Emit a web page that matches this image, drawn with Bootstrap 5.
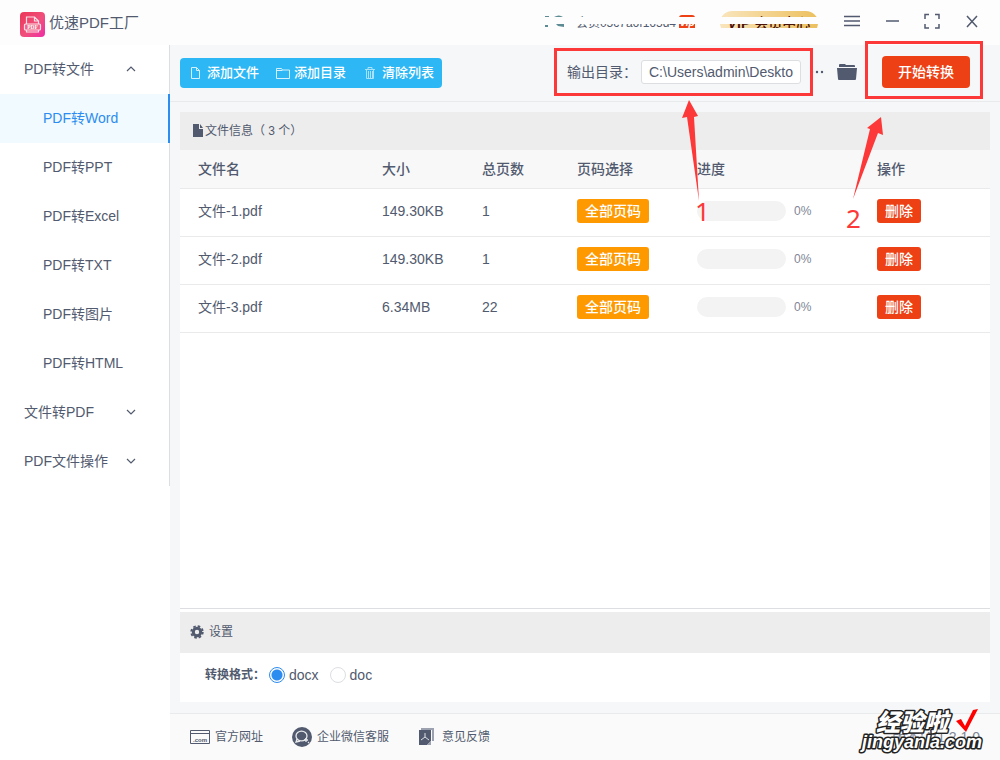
<!DOCTYPE html>
<html lang="zh-CN">
<head>
<meta charset="utf-8">
<meta name="viewport" content="width=device-width, initial-scale=1">
<title>优速PDF工厂</title>
<link href="https://cdn.jsdelivr.net/npm/bootstrap@5.3.0/dist/css/bootstrap.min.css" rel="stylesheet">
<style>
:root{--ink:#515a6e;--blue:#2d8cf0;--red:#ed4014}
body{font-family:"Liberation Sans","Noto Sans CJK SC",sans-serif;font-size:14px;line-height:20px;color:var(--ink);background:#f5f7f9}
svg{display:block;flex:none}
.titlebar{height:45px;background:#fdfdfd;padding:0 18px 0 20px}
.brand{font-size:15px;line-height:24px}
.wins{padding-bottom:3px}
.winbtn{border:0;background:none;padding:0;color:var(--ink);width:20px;height:20px}
.member{font-size:12px;height:34px}
.member-name{margin-left:10px}
.veil{position:absolute;left:0;right:0;background:#fdfdfd}
.veil-mid{top:11px;height:7px}
.veil-low{top:22px;height:12px}
.vip{background:var(--red);color:#fff;font-size:10px;font-weight:700;font-style:italic;line-height:16px;width:16px;height:16px;border-radius:3px;text-align:center;margin-left:3px}
.gold{background:linear-gradient(90deg,#f9e5bd,#ecc05e);color:#4a1208;border:0;border-radius:12px;width:98px;height:24px;padding:0;font-size:14px;font-weight:500;margin-left:25px}
.side{width:170px;background:#fff}
.side-list{border-right:1px solid #dcdee2;height:441px}
.side-list a,.side-list button{height:49px;display:flex;align-items:center;color:inherit;text-decoration:none;width:100%;border:0;background:none;padding:0 33px 2px 24px;justify-content:space-between}
.side-list a{padding-left:43px}
.side-list a.active{background:#f0faff;color:var(--blue);border-right:2px solid var(--blue);margin-right:-1px;width:auto}
.toolbar{height:57px;border-bottom:1px solid #e8eaec;padding:0 30px 0 10px}
.output{padding-bottom:3px}
.actions{background:#2db7f5;border-radius:4px;height:30px}
.actions button{border:0;background:none;color:#fff;font-size:13px;font-weight:500;padding:0 8px;height:30px;display:flex;align-items:center}
.actions button:not(:first-child){padding-left:9px}
.path{width:160px;height:24px;border:1px solid #dcdee2;border-radius:3px;padding:0 7px;font-size:14px;color:var(--ink);background:#fff}
.start{background:var(--red);color:#fff;border:0;border-radius:4px;width:88px;height:32px;font-size:14px;font-weight:500;margin-left:25px}
.panels{padding:10px 10px 11px}
.bar-title{background:#ededed;font-size:12px;line-height:20px;font-weight:400;margin:0;display:flex;align-items:center}
.bar-files{height:38px;padding-left:12px}
.bar-set{height:41px;padding:0 0 2px 10px;gap:5px}
.files{table-layout:fixed;margin:0}
.files>:not(caption)>*>*{padding:0 0 2px 18px;height:48px;vertical-align:middle;color:var(--ink);background:#fff;border-color:#e8eaec;box-shadow:none}
.files>:not(caption)>*>:nth-child(n+4){padding-left:17px}
.files>thead>tr>th{height:38px;background:#f8f8f9;font-weight:500;padding-bottom:0}
.tag{border:0;border-radius:3px;color:#fff;height:24px;padding:0 8px;font-size:14px;line-height:24px;font-weight:500;display:block}
.tag-all{background:#f90}
.tag-del{background:var(--red)}
.track{width:89px;height:20px;border-radius:10px;background:#f3f3f3}
.pct{font-size:12px;color:#808695}
.setwrap{border-top:1px solid #dcdee2;padding-top:3px}
.settings{height:49px;padding:0 25px 6px}
.settings input{appearance:none;width:16px;height:16px;border:1px solid #dcdee2;border-radius:50%;margin:0;background:#fff}
.settings input:checked{border-color:var(--blue);background:radial-gradient(circle,var(--blue) 5px,#fff 6px)}
.fmt{font-size:12px;font-weight:700;width:64px}
.settings input.second{margin-left:11px}
.foot{height:47px;border-top:1px solid #e8eaec;background:#fafafa;padding:0 20px;font-size:12px}
.foot a{color:inherit;text-decoration:none;display:flex;align-items:center;gap:5px;margin-right:29px}
.foot a:last-of-type{gap:8px}
.ver{font-size:14px;color:#808695}
.notes{position:absolute;top:0;right:0;pointer-events:none}
.stamp{position:absolute;right:12px;bottom:0;pointer-events:none}
</style>
</head>
<body>
<div class="min-vh-100 d-flex flex-column position-relative">
<header class="titlebar d-flex align-items-center">
  <svg class="mt-1" width="25" height="25" viewBox="0 0 25 25"><defs><linearGradient id="lg" x1="0" y1="0" x2="1" y2="1"><stop offset="0" stop-color="#eb3556"/><stop offset=".55" stop-color="#f0507c"/><stop offset="1" stop-color="#ef2ca8"/></linearGradient></defs><rect width="25" height="25" rx="4" fill="url(#lg)"/><g fill="none" stroke="#fde1e8" stroke-width="1.200"><path d="M6.500 12V5h8l4 4v3M14.500 5v4h4M6.500 18v2h12v-2"/><rect x="4.500" y="12" width="16" height="6" rx="1" fill="#ef6387"/></g><text x="12.500" y="17" font-family="Liberation Serif" font-size="5.500" font-weight="700" text-anchor="middle" fill="#fff">PDF</text></svg>
  <h1 class="brand fw-normal mb-0 ms-1">优速PDF工厂</h1>
  <div class="member d-flex align-items-center position-relative ms-auto me-4 overflow-hidden">
    <svg width="24" height="24" viewBox="0 0 24 24"><path d="M3 5h4v2H3zM12 6q5-3 9 0l1 4v6l-6-1-4-4zM0 19h5v2H0zM3 14h3v2H3z" fill="#5d8b93"/></svg>
    <span class="member-name">会员05c7a6f165d4</span><span class="vip">Vip</span>
    <button class="gold" type="button"><b><i>V</i>IP</b> 会员中心</button>
    <span class="veil veil-mid"></span><span class="veil veil-low"></span>
  </div>
  <div class="wins d-flex align-items-center gap-3">
    <button class="winbtn" type="button" aria-label="菜单"><svg width="20" height="20" fill="none" stroke="currentColor" stroke-width="1.500"><path d="M2 5.500h16M2 10h16M2 14.500h16"/></svg></button>
    <button class="winbtn mx-1" type="button" aria-label="最小化"><svg width="20" height="20" fill="none" stroke="currentColor" stroke-width="1.500"><path d="M4 10h13"/></svg></button>
    <button class="winbtn" type="button" aria-label="最大化"><svg width="20" height="20" fill="none" stroke="currentColor" stroke-width="1.500"><path d="M3 8V3.500h4M13 3.500h4V8M17 13v4h-4M7 17H3v-4"/></svg></button>
    <button class="winbtn ms-1" type="button" aria-label="关闭"><svg width="20" height="20" fill="none" stroke="currentColor" stroke-width="1.500"><path d="m5 5 10 11M15 5 5 16"/></svg></button>
  </div>
</header>
<div class="d-flex flex-grow-1">
  <nav class="side flex-shrink-0"><div class="side-list">
    <button type="button">PDF转文件<svg width="10" height="8" fill="none" stroke="currentColor" stroke-width="1.200"><path d="m1 6 4-4 4 4"/></svg></button>
    <a class="active" href="#">PDF转Word</a><a href="#">PDF转PPT</a><a href="#">PDF转Excel</a><a href="#">PDF转TXT</a><a href="#">PDF转图片</a><a href="#">PDF转HTML</a>
    <button type="button">文件转PDF<svg width="10" height="8" fill="none" stroke="currentColor" stroke-width="1.200"><path d="m1 2 4 4 4-4"/></svg></button>
    <button type="button">PDF文件操作<svg width="10" height="8" fill="none" stroke="currentColor" stroke-width="1.200"><path d="m1 2 4 4 4-4"/></svg></button>
  </div></nav>
  <main class="flex-grow-1 d-flex flex-column">
    <div class="toolbar d-flex align-items-center">
      <div class="actions d-flex">
        <button type="button" class="gap-1"><svg width="15" height="14" fill="none" stroke="#d5f1fd"><path d="M3.500 1.500h5l3 3v8h-8zM8.500 1.500v3h3"/></svg>添加文件</button>
        <button type="button" class="gap-1"><svg width="14" height="14" fill="none" stroke="#d5f1fd"><path d="M.5 2.500h5l1 1.500h7v8.500H.5zM.5 4.500h6"/></svg>添加目录</button>
        <button type="button" class="gap-1"><svg width="15" height="14" fill="none" stroke="#a9e2fb"><path d="M2 3.500h10M5 3V1.500h4V3M3.500 4v8.500h7V4M5.500 5v7M7.500 5v7M9.500 5v7"/></svg>清除列表</button>
      </div>
      <div class="output d-flex align-items-center ms-auto">
        <label for="out" class="me-1">输出目录：</label>
        <input class="path" id="out" value="C:\Users\admin\Deskto">
        <button class="winbtn ms-2" type="button" aria-label="更多"><svg width="20" height="20" fill="currentColor"><circle cx="3" cy="10" r="1.200"/><circle cx="8" cy="10" r="1.200"/><circle cx="13" cy="10" r="1.200"/></svg></button>
        <button class="winbtn ms-2" type="button" aria-label="打开文件夹"><svg width="20" height="20" fill="currentColor"><path d="M2 5V3q0-1 1-1h5l1 1h8q1 0 1 1v1zM0 6h20l-1 11q0 1-1 1H2q-1 0-1-1z"/></svg></button>
        <button class="start" type="button">开始转换</button>
      </div>
    </div>
    <div class="panels flex-grow-1 d-flex flex-column">
      <section class="bg-white flex-grow-1 d-flex flex-column">
        <h2 class="bar-title bar-files"><svg width="13" height="14" fill="currentColor"><path d="M1 0h6v5h4v8H1zM8 0l3 4H8z"/></svg>文件信息（ 3 个）</h2>
        <table class="table files">
          <colgroup><col style="width:184px"><col style="width:100px"><col style="width:96px"><col style="width:120px"><col style="width:180px"><col></colgroup>
          <thead><tr><th>文件名</th><th>大小</th><th>总页数</th><th>页码选择</th><th>进度</th><th>操作</th></tr></thead>
          <tbody id="rows"></tbody>
        </table>
      </section>
      <section class="bg-white setwrap">
        <h2 class="bar-title bar-set"><svg width="14" height="14" viewBox="0 0 14 14"><circle cx="7" cy="7" r="3.700" fill="none" stroke="#515a6e" stroke-width="3"/><circle cx="7" cy="7" r="5.800" fill="none" stroke="#515a6e" stroke-width="1.800" stroke-dasharray="2.560 2"/></svg>设置</h2>
        <div class="settings d-flex align-items-center">
          <span class="fmt">转换格式：</span>
          <input type="radio" name="fmt" id="fx" checked><label for="fx" class="ms-1">docx</label>
          <input type="radio" name="fmt" id="fd" class="second"><label for="fd" class="ms-1">doc</label>
        </div>
      </section>
    </div>
    <footer class="foot d-flex align-items-center">
      <a href="#"><svg width="20" height="16" fill="none" stroke="currentColor"><path d="M.5 1.500h19v13H.5zM.5 4.500h19"/><text x="3" y="13" font-size="6" font-weight="700" fill="currentColor" stroke="none">.com</text></svg>官方网址</a>
      <a href="#"><svg width="20" height="20"><circle cx="10" cy="10" r="10" fill="#515a6e"/><ellipse cx="9.500" cy="9" rx="5.500" ry="4.800" fill="none" stroke="#e8eaec" stroke-width="1.300"/><path d="m5 12-1 3 4-1M14 11v4M12 13h4M16 15l1 1" stroke="#e8eaec" stroke-width="1.300" fill="none"/></svg>企业微信客服</a>
      <a href="#"><svg width="16" height="18"><path d="M3 1h12v12" fill="none" stroke="#9ba1ae" stroke-width="2"/><path d="M1 2h12v11l-4 4H1z" fill="#515a6e"/><path d="M7 5v4l-4 3M7 9l4 3" stroke="#dfe1e6" fill="none"/><path d="M13 13v4H9z" fill="#9ba1ae"/></svg>意见反馈</a>
      <span class="ver ms-auto">版本: V1.2.1.0</span>
    </footer>
  </main>
</div>
<svg class="notes" width="460" height="240" viewBox="540 0 460 240" fill="none" stroke="#fd3838" stroke-width="3"><path d="M555.500 49.500h256v45h-256zM866.500 42.500h115v55h-115z"/><path d="m689 100 9 16-4 1 5 84-12-84-5 1zM881 117l2 18-5-2-25 66 17-70-3-1z" fill="#fd3838" stroke="none"/><g fill="#fd3838" stroke="none" font-family="Noto Sans" font-size="26"><text x="695" y="221">1</text><text x="846" y="228">2</text></g></svg>
<svg class="stamp" width="130" height="60" viewBox="0 0 130 60" font-weight="900" paint-order="stroke" stroke="#222" stroke-width="3" fill="#fff" stroke-linejoin="round"><text x="18" y="31" font-size="24" font-style="italic" font-family="Noto Sans CJK SC">经验啦</text><text x="4" y="48" font-size="18" font-weight="700" font-style="italic" font-family="Liberation Sans">jingyanla.com</text><path d="m98 21 5-2 4 7 8-16 5-1-12 23z" fill="#f00" stroke="none"/></svg>
</div>
<script>
const files = [['文件-1.pdf','149.30KB',1],['文件-2.pdf','149.30KB',1],['文件-3.pdf','6.34MB',22]];
document.getElementById('rows').innerHTML = files.map(([name,size,pages]) => `<tr><td>${name}</td><td>${size}</td><td>${pages}</td><td><button type="button" class="tag tag-all">全部页码</button></td><td><div class="d-flex align-items-center gap-2"><div class="track"></div><span class="pct">0%</span></div></td><td><button type="button" class="tag tag-del">删除</button></td></tr>`).join('');
</script>
<script src="https://cdn.jsdelivr.net/npm/bootstrap@5.3.0/dist/js/bootstrap.bundle.min.js"></script>
</body>
</html>
